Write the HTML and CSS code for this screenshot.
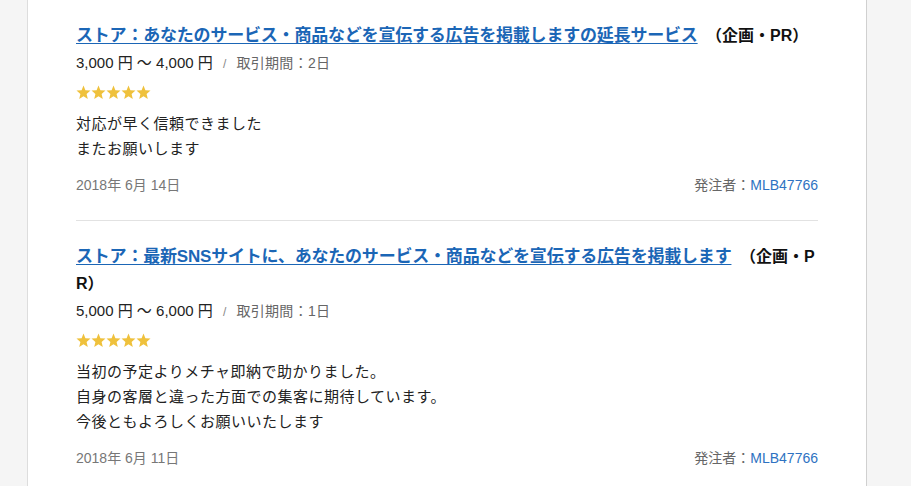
FILE: index.html
```html
<!DOCTYPE html>
<html lang="ja">
<head>
    <meta charset="UTF-8">
    <meta name="viewport" content="width=device-width, initial-scale=1.0">
    <title>評価一覧</title>
    <link rel="stylesheet" href="styles.css">
</head>
<body>
    <main class="panel">
        <article class="review">
            <h3 class="review-title"><a href="#">ストア：あなたのサービス・商品などを宣伝する広告を掲載しますの延長サービス</a> （企画・PR）</h3>
            <p class="review-price">3,000 円 〜 4,000 円 <span class="sep">/</span> <span class="term">取引期間：2日</span></p>
            <div class="stars">
                <svg width="76" height="15" viewBox="0 0 76 15">
                    <g fill="#efc13c">
                        <polygon points="7.5,0.5 9.4,5.2 14.5,5.6 10.6,8.9 11.8,14 7.5,11.3 3.2,14 4.4,8.9 0.5,5.6 5.6,5.2"/>
                        <polygon transform="translate(15 0)" points="7.5,0.5 9.4,5.2 14.5,5.6 10.6,8.9 11.8,14 7.5,11.3 3.2,14 4.4,8.9 0.5,5.6 5.6,5.2"/>
                        <polygon transform="translate(30 0)" points="7.5,0.5 9.4,5.2 14.5,5.6 10.6,8.9 11.8,14 7.5,11.3 3.2,14 4.4,8.9 0.5,5.6 5.6,5.2"/>
                        <polygon transform="translate(45 0)" points="7.5,0.5 9.4,5.2 14.5,5.6 10.6,8.9 11.8,14 7.5,11.3 3.2,14 4.4,8.9 0.5,5.6 5.6,5.2"/>
                        <polygon transform="translate(60 0)" points="7.5,0.5 9.4,5.2 14.5,5.6 10.6,8.9 11.8,14 7.5,11.3 3.2,14 4.4,8.9 0.5,5.6 5.6,5.2"/>
                    </g>
                </svg>
            </div>
            <p class="review-comment">対応が早く信頼できました<br>またお願いします</p>
            <div class="review-footer">
                <span class="date">2018年 6月 14日</span>
                <span class="orderer">発注者：<a href="#">MLB47766</a></span>
            </div>
        </article>
        <article class="review">
            <h3 class="review-title"><a href="#">ストア：最新SNSサイトに、あなたのサービス・商品などを宣伝する広告を掲載します</a> （企画・PR）</h3>
            <p class="review-price">5,000 円 〜 6,000 円 <span class="sep">/</span> <span class="term">取引期間：1日</span></p>
            <div class="stars">
                <svg width="76" height="15" viewBox="0 0 76 15">
                    <g fill="#efc13c">
                        <polygon points="7.5,0.5 9.4,5.2 14.5,5.6 10.6,8.9 11.8,14 7.5,11.3 3.2,14 4.4,8.9 0.5,5.6 5.6,5.2"/>
                        <polygon transform="translate(15 0)" points="7.5,0.5 9.4,5.2 14.5,5.6 10.6,8.9 11.8,14 7.5,11.3 3.2,14 4.4,8.9 0.5,5.6 5.6,5.2"/>
                        <polygon transform="translate(30 0)" points="7.5,0.5 9.4,5.2 14.5,5.6 10.6,8.9 11.8,14 7.5,11.3 3.2,14 4.4,8.9 0.5,5.6 5.6,5.2"/>
                        <polygon transform="translate(45 0)" points="7.5,0.5 9.4,5.2 14.5,5.6 10.6,8.9 11.8,14 7.5,11.3 3.2,14 4.4,8.9 0.5,5.6 5.6,5.2"/>
                        <polygon transform="translate(60 0)" points="7.5,0.5 9.4,5.2 14.5,5.6 10.6,8.9 11.8,14 7.5,11.3 3.2,14 4.4,8.9 0.5,5.6 5.6,5.2"/>
                    </g>
                </svg>
            </div>
            <p class="review-comment">当初の予定よりメチャ即納で助かりました。<br>自身の客層と違った方面での集客に期待しています。<br>今後ともよろしくお願いいたします</p>
            <div class="review-footer">
                <span class="date">2018年 6月 11日</span>
                <span class="orderer">発注者：<a href="#">MLB47766</a></span>
            </div>
        </article>
    </main>
</body>
</html>
```

FILE: styles.css
```css
body {
    margin: 0;
    padding: 0;
    background-color: #f5f5f5;
    font-family: "Liberation Sans", Arial, "Noto Sans CJK JP", sans-serif;
    color: #222;
}

.panel {
    width: 742px;
    margin-left: 27px;
    padding: 0 48px;
    background-color: #fff;
    border-left: 1px solid #ddd;
    border-right: 1px solid #d0d0d0;
    min-height: 486px;
}

.review {
    padding: 22px 0 25px;
    border-bottom: 1px solid #e2e2e2;
}

.review-title {
    margin: 0;
    font-size: 16px;
    line-height: 27px;
    font-weight: bold;
    color: #111;
    word-break: break-all;
}

.review-title a {
    margin-right: 4px;
    font-size: 17px;
    color: #1b66b6;
    letter-spacing: -0.2px;
    text-decoration: underline;
    text-underline-offset: 2px;
}

.review-price {
    margin: 2px 0 0;
    font-size: 15px;
    line-height: 24px;
    color: #222;
}

.sep {
    margin: 0 6px;
    font-size: 12px;
    color: #888;
}

.term {
    font-size: 14px;
    letter-spacing: 0.3px;
    color: #666;
}

.stars {
    margin-top: 9px;
    height: 15px;
    line-height: 0;
}

.review-comment {
    margin: 11px 0 0;
    font-size: 15px;
    line-height: 25px;
    letter-spacing: 0.5px;
    color: #222;
}

.review-footer {
    display: flex;
    justify-content: space-between;
    margin-top: 14px;
    font-size: 14px;
    line-height: 20px;
    color: #777;
}

.orderer {
    color: #666;
}

.orderer a {
    color: #2e72c2;
    text-decoration: none;
}
```
